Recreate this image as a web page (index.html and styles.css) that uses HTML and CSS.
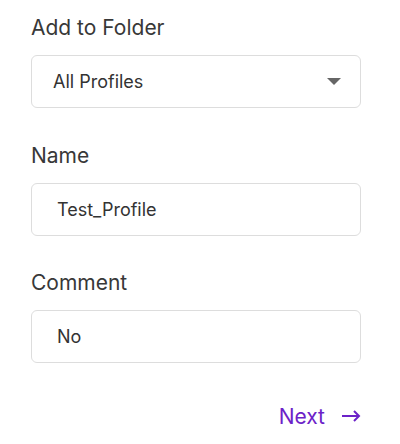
FILE: index.html
```html
<!DOCTYPE html>
<html lang="en">
<head>
  <meta charset="UTF-8">
  <meta name="viewport" content="width=device-width, initial-scale=1.0">
  <title>New Profile</title>
  <link rel="stylesheet" href="styles.css">
</head>
<body>

  <form class="profile-form">
    <div class="form-group">
      <label class="field-label">Add to Folder</label>
      <div class="select-box">
        <span>All Profiles</span>
        <span class="caret"></span>
      </div>
    </div>
    <div class="form-group">
      <label class="field-label" for="name">Name</label>
      <input class="text-input" type="text" id="name" value="Test_Profile">
    </div>
    <div class="form-group">
      <label class="field-label" for="comment">Comment</label>
      <input class="text-input" type="text" id="comment" value="No">
    </div>
    <div class="actions">
      <button type="button" class="next-btn">
        Next
        <svg width="19" height="12" viewBox="0 0 19 12" fill="none" stroke="currentColor" stroke-width="2">
          <path d="M0 6h17M12 1l5 5-5 5"/>
        </svg>
      </button>
    </div>
  </form>

</body>
</html>
```

FILE: styles.css
```css
* {
  margin: 0;
  padding: 0;
  box-sizing: border-box;
}

body {
  background: #fff;
  font-family: 'Inter', 'Noto Sans', sans-serif;
  color: #333;
}

.profile-form {
  width: 330px;
  margin-left: 31px;
  padding-top: 14px;
}

.form-group {
  margin-bottom: 33.5px;
}

.field-label {
  display: block;
  font-size: 21px;
  line-height: 28px;
  color: #383838;
  margin-bottom: 13px;
}

.select-box,
.text-input {
  width: 100%;
  height: 53px;
  border: 1px solid #ddd;
  border-radius: 6px;
  font-family: inherit;
  font-size: 18px;
  color: #333;
  background: #fff;
}

.select-box {
  display: flex;
  align-items: center;
  justify-content: space-between;
  padding: 0 19px 0 21px;
}

.caret {
  width: 0;
  height: 0;
  border-left: 7.5px solid transparent;
  border-right: 7.5px solid transparent;
  border-top: 7px solid #666;
}

.text-input {
  padding: 0 25px;
  outline: none;
}

.actions {
  display: flex;
  justify-content: flex-end;
  padding-top: 7px;
}

.next-btn {
  display: flex;
  align-items: center;
  gap: 17px;
  background: none;
  border: none;
  font-family: inherit;
  font-size: 21px;
  color: #6c22c8;
  cursor: pointer;
}
```
